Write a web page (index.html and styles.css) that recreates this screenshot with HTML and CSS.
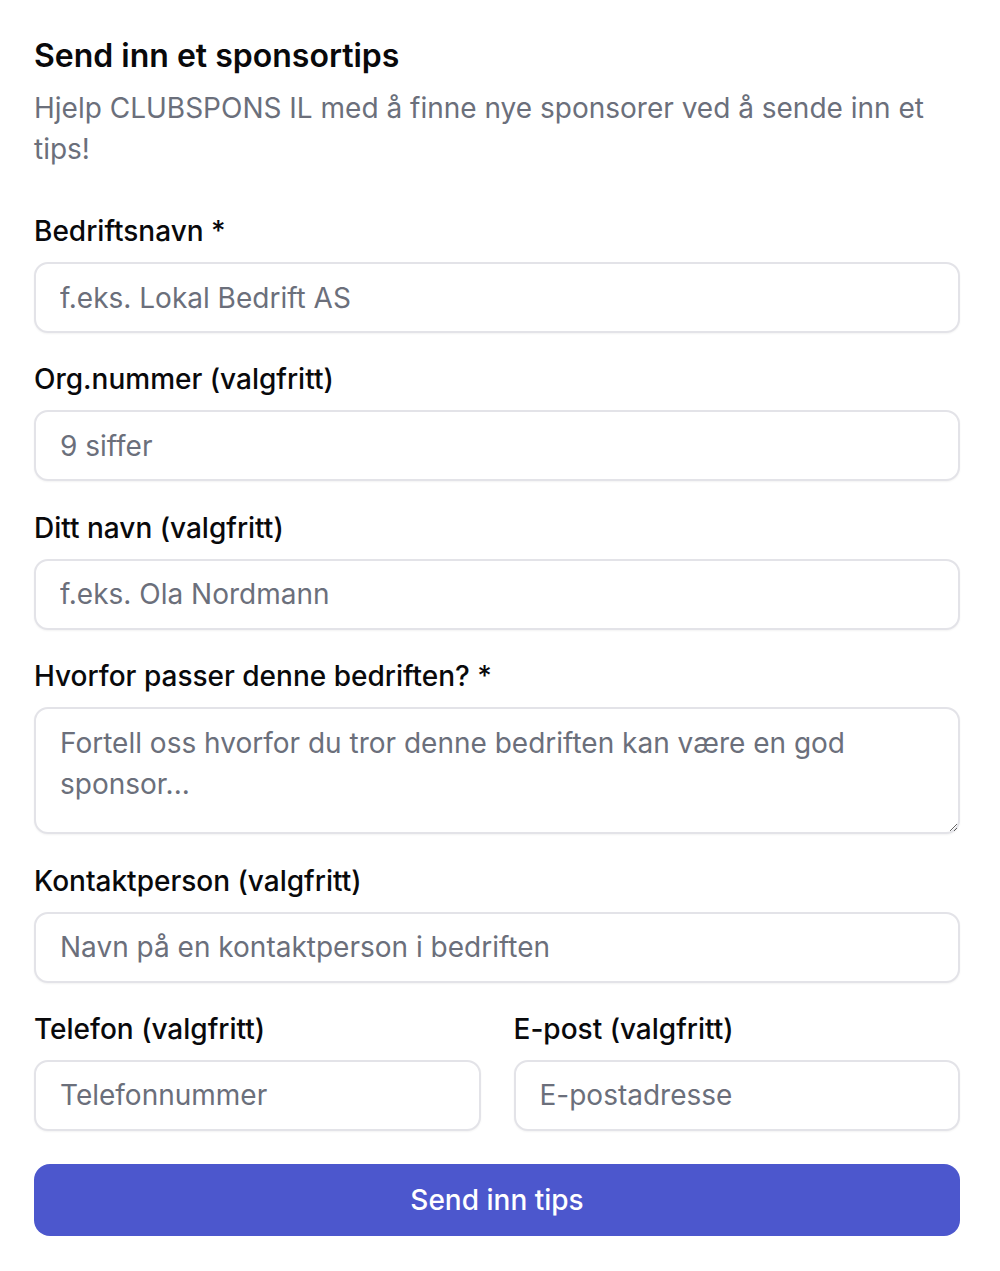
FILE: index.html
```html
<!DOCTYPE html>
<html lang="nb">
<head>
    <meta charset="UTF-8">
    <meta name="viewport" content="width=device-width, initial-scale=1.0">
    <title>Send inn et sponsortips</title>
    <link rel="stylesheet" href="styles.css">
</head>
<body>
    <div class="tip-card">
        <h2 class="tip-title">Send inn et sponsortips</h2>
        <p class="tip-intro">Hjelp CLUBSPONS IL med å finne nye sponsorer ved å sende inn et tips!</p>

        <form class="tip-form" onsubmit="return false;">
            <div class="field">
                <label for="company">Bedriftsnavn *</label>
                <input id="company" type="text" placeholder="f.eks. Lokal Bedrift AS">
            </div>
            <div class="field">
                <label for="orgnr">Org.nummer (valgfritt)</label>
                <input id="orgnr" type="text" placeholder="9 siffer">
            </div>
            <div class="field">
                <label for="name">Ditt navn (valgfritt)</label>
                <input id="name" type="text" placeholder="f.eks. Ola Nordmann">
            </div>
            <div class="field">
                <label for="reason">Hvorfor passer denne bedriften? *</label>
                <textarea id="reason" rows="2" placeholder="Fortell oss hvorfor du tror denne bedriften kan være en god sponsor..."></textarea>
            </div>
            <div class="field">
                <label for="contact">Kontaktperson (valgfritt)</label>
                <input id="contact" type="text" placeholder="Navn på en kontaktperson i bedriften">
            </div>
            <div class="field-row">
                <div class="field">
                    <label for="phone">Telefon (valgfritt)</label>
                    <input id="phone" type="tel" placeholder="Telefonnummer">
                </div>
                <div class="field">
                    <label for="email">E-post (valgfritt)</label>
                    <input id="email" type="email" placeholder="E-postadresse">
                </div>
            </div>
            <button class="submit-btn" type="submit">Send inn tips</button>
        </form>
    </div>
</body>
</html>
```

FILE: styles.css
```css
/* Sponsortips-skjema */
body {
    font-family: 'Inter', 'Noto Sans', sans-serif;
    margin: 0;
    padding: 0;
    background-color: #fff;
    color: #09090b;
}
.tip-card {
    width: 926px;
    margin-left: 34px;
    padding-top: 36px;
}
.tip-title {
    font-size: 32px;
    font-weight: 600;
    line-height: 40px;
    margin: 0;
}
.tip-intro {
    font-size: 28px;
    line-height: 41px;
    color: #6b6f7b;
    margin: 12px 0 0;
}
.tip-form {
    display: flex;
    flex-direction: column;
    gap: 26.4px;
    margin-top: 41px;
}
.field {
    display: flex;
    flex-direction: column;
    gap: 11px;
}
.field label {
    font-size: 28px;
    font-weight: 500;
    line-height: 40px;
}
.field input,
.field textarea {
    font-family: inherit;
    font-size: 28px;
    color: #09090b;
    box-sizing: border-box;
    width: 100%;
    border: 2px solid #e3e3e8;
    border-radius: 14px;
    padding: 0 24px;
    background: #fff;
    box-shadow: 0 1px 2px rgba(0, 0, 0, 0.05);
    outline: none;
}
.field input {
    height: 71px;
}
.field textarea {
    height: 127px;
    padding-top: 14px;
    line-height: 41px;
    resize: vertical;
}
.field input::placeholder,
.field textarea::placeholder {
    color: #6b6f7b;
}
.field-row {
    display: grid;
    grid-template-columns: 1fr 1fr;
    gap: 33px;
}
.submit-btn {
    font-family: inherit;
    font-size: 28px;
    font-weight: 500;
    color: #fff;
    background-color: #4c57cd;
    border: none;
    border-radius: 16px;
    height: 72px;
    margin-top: 7px;
    cursor: pointer;
}
```
